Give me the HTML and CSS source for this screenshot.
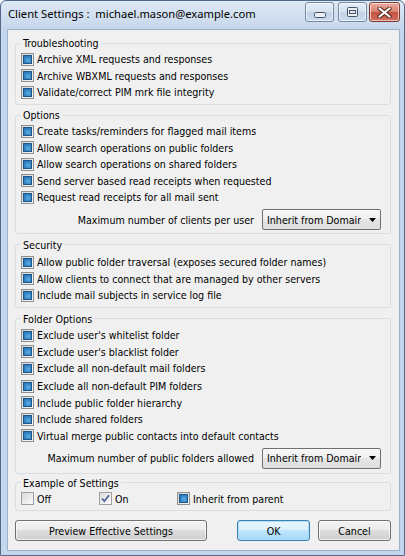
FILE: index.html
```html
<!DOCTYPE html>
<html>
<head>
  <title>Client Settings</title>
  <meta name="viewport" content="width=device-width, initial-scale=1.0" />
  <link rel="stylesheet" href="styles.css">
</head>
<body>
  <div class="window">
    <div class="titlebar">
      <span class="title">Client Settings :  michael.mason@example.com</span>
      <div class="caption">
        <span class="cap-btn cap-min">
          <svg width="12" height="6" viewBox="0 0 12 6"><rect x="0.5" y="0.5" width="11" height="5" rx="1" fill="#e9edf2" stroke="#44556b"/></svg>
        </span>
        <span class="cap-btn cap-max">
          <svg width="11" height="10" viewBox="0 0 11 10"><rect x="0.5" y="0.5" width="10" height="9" rx="1" fill="#e9edf2" stroke="#44556b"/><rect x="2.5" y="3.5" width="6" height="3" fill="#dfe7f1" stroke="#44556b"/></svg>
        </span>
        <span class="cap-btn cap-close">
          <svg width="15" height="11" viewBox="0 0 15 11"><path d="M2.5 1.5 L12.5 9.5 M12.5 1.5 L2.5 9.5" stroke="#5a2a22" stroke-width="4.2" stroke-linecap="round"/><path d="M2.5 1.5 L12.5 9.5 M12.5 1.5 L2.5 9.5" stroke="#ffffff" stroke-width="2.2" stroke-linecap="round"/></svg>
        </span>
      </div>
    </div>

    <div class="client">
      <fieldset class="group group-trouble">
        <legend>Troubleshooting</legend>
        <div class="row"><span class="cb mixed"></span>Archive XML requests and responses</div>
        <div class="row"><span class="cb mixed"></span>Archive WBXML requests and responses</div>
        <div class="row"><span class="cb mixed"></span>Validate/correct PIM mrk file integrity</div>
      </fieldset>

      <fieldset class="group group-options">
        <legend>Options</legend>
        <div class="row"><span class="cb mixed"></span>Create tasks/reminders for flagged mail items</div>
        <div class="row"><span class="cb mixed"></span>Allow search operations on public folders</div>
        <div class="row"><span class="cb mixed"></span>Allow search operations on shared folders</div>
        <div class="row"><span class="cb mixed"></span>Send server based read receipts when requested</div>
        <div class="row"><span class="cb mixed"></span>Request read receipts for all mail sent</div>
        <div class="limit">
          <span>Maximum number of clients per user</span>
          <div class="combo"><span class="combo-text">Inherit from Domain</span><svg width="7" height="4" viewBox="0 0 7 4"><path d="M0 0 H7 L3.5 4 Z" fill="#000"/></svg></div>
        </div>
      </fieldset>

      <fieldset class="group group-security">
        <legend>Security</legend>
        <div class="row"><span class="cb mixed"></span>Allow public folder traversal (exposes secured folder names)</div>
        <div class="row"><span class="cb mixed"></span>Allow clients to connect that are managed by other servers</div>
        <div class="row"><span class="cb mixed"></span>Include mail subjects in service log file</div>
      </fieldset>

      <fieldset class="group group-folders">
        <legend>Folder Options</legend>
        <div class="row"><span class="cb mixed"></span>Exclude user's whitelist folder</div>
        <div class="row"><span class="cb mixed"></span>Exclude user's blacklist folder</div>
        <div class="row"><span class="cb mixed"></span>Exclude all non-default mail folders</div>
        <div class="row row-gap"><span class="cb mixed"></span>Exclude all non-default PIM folders</div>
        <div class="row"><span class="cb mixed"></span>Include public folder hierarchy</div>
        <div class="row"><span class="cb mixed"></span>Include shared folders</div>
        <div class="row"><span class="cb mixed"></span>Virtual merge public contacts into default contacts</div>
        <div class="limit">
          <span>Maximum number of public folders allowed</span>
          <div class="combo"><span class="combo-text">Inherit from Domain</span><svg width="7" height="4" viewBox="0 0 7 4"><path d="M0 0 H7 L3.5 4 Z" fill="#000"/></svg></div>
        </div>
      </fieldset>

      <fieldset class="group group-example">
        <legend>Example of Settings</legend>
        <div class="choices">
          <div class="row choice"><span class="cb off"></span>Off</div>
          <div class="row choice"><span class="cb on"><svg width="11" height="11" viewBox="0 0 11 11"><path d="M2 5.5 L4.3 8.2 L9 2.2" fill="none" stroke="#4d5f98" stroke-width="1.7"/></svg></span>On</div>
          <div class="row choice"><span class="cb mixed"></span>Inherit from parent</div>
        </div>
      </fieldset>

      <div class="actions">
        <button class="btn btn-preview">Preview Effective Settings</button>
        <button class="btn btn-ok">OK</button>
        <button class="btn btn-cancel">Cancel</button>
      </div>
    </div>
  </div>
</body>
</html>
```

FILE: styles.css
```css
body {
  margin: 0;
  background: #ffffff;
  font-family: "DejaVu Sans Condensed", "DejaVu Sans", sans-serif;
  font-size: 10.6px;
  color: #000;
}
.window {
  width: 405px;
  height: 556px;
  box-sizing: border-box;
  border: 1px solid #52698a;
  border-radius: 6px 6px 0 0;
  background: linear-gradient(#dde8f5, #cddcee 20px, #c4d6ec 29px, #c4d6ec);
  display: flex;
  flex-direction: column;
}
.titlebar {
  height: 28px;
  display: flex;
  align-items: flex-start;
  padding-left: 7px;
}
.title {
  font-family: "Noto Sans", sans-serif;
  font-size: 11.2px;
  line-height: 26px;
  white-space: pre;
}
.caption {
  margin-left: auto;
  margin-right: 4px;
  margin-top: 1px;
  display: flex;
}
.cap-btn {
  height: 20px;
  width: 29px;
  box-sizing: border-box;
  border: 1px solid #75889f;
  border-radius: 3px;
  background: linear-gradient(#e6eef8, #d3e0ef 50%, #c2d3e8 50%, #cbdbee);
  box-shadow: inset 0 0 0 1px rgba(255,255,255,0.6);
  display: flex;
  align-items: center;
  justify-content: center;
}
.cap-min { margin-right: 4px; }
.cap-min svg { margin-top: 6px; }
.cap-max { margin-right: 2px; }
.cap-close {
  width: 31px;
  border-color: #7c3a2f;
  background: linear-gradient(#e9a99b, #d88271 50%, #c4523f 50%, #d0705f);
}
.client {
  flex: 1;
  margin: 0 4px 4px 6px;
  border: 1px solid #9db1ca;
  background: #f0f0f0;
  padding: 0 8px 0 7px;
  display: flex;
  flex-direction: column;
}
.group {
  margin: 4px 0 0;
  padding: 1px 5px 3px;
  border: 1px solid #d5dfe5;
  border-radius: 3px;
  min-width: 0;
}
.group legend {
  padding: 0 2px;
  line-height: 14px;
}
.group-trouble { margin-top: 6px; }
.group-options { margin-top: 3.5px; }
.group-security { margin-top: 3.5px; padding-top: 2.5px; }
.group-folders { margin-top: 4px; padding-top: 1.5px; padding-bottom: 4px; }
.group-example { margin-top: 2px; padding-top: 1px; }
.row {
  display: flex;
  align-items: center;
  gap: 3px;
  height: 16.5px;
  white-space: nowrap;
}
.row-gap { margin-top: 1.5px; }
.cb {
  width: 13px;
  height: 13px;
  box-sizing: border-box;
  border: 1px solid #8e8f8f;
  background: linear-gradient(135deg, #d6d6d6, #f8f8f8);
  position: relative;
  flex: none;
}
.cb.mixed::after {
  content: "";
  position: absolute;
  left: 1px;
  top: 1px;
  width: 9px;
  height: 9px;
  box-sizing: border-box;
  border: 1px solid #1d5789;
  background: radial-gradient(circle at 60% 60%, #5eaee4, #2b7cc0 70%);
}
.cb.off {
  border-color: #a0a0a0;
  background: linear-gradient(135deg, #d9d9d9, #fbfbfb);
}
.cb.on {
  border-color: #a0a0a0;
  background: linear-gradient(135deg, #dcdcdc, #fbfbfb);
}
.cb.on svg {
  display: block;
}
.limit {
  display: flex;
  justify-content: flex-end;
  align-items: center;
  gap: 8px;
  height: 21px;
  margin-top: 3.5px;
  padding-right: 4px;
  white-space: nowrap;
}
.combo {
  width: 119px;
  height: 21px;
  box-sizing: border-box;
  border: 1px solid #707070;
  border-radius: 2px;
  background: linear-gradient(#f8f8f8, #efefef 50%, #e5e5e5 50%, #dedede);
  display: flex;
  align-items: center;
  padding-left: 4px;
}
.combo-text {
  width: 94px;
  overflow: hidden;
  white-space: nowrap;
}
.combo svg {
  margin-left: 8px;
}
.choices {
  display: flex;
}
.choice {
  width: 78px;
  flex: none;
}
.actions {
  display: flex;
  margin-top: 9px;
}
.btn {
  height: 21px;
  box-sizing: border-box;
  border: 1px solid #707070;
  border-radius: 3px;
  background: linear-gradient(#f2f2f2, #ebebeb 50%, #dddddd 50%, #cfcfcf);
  box-shadow: inset 0 0 0 1px rgba(255,255,255,0.7);
  font: inherit;
  color: #000;
  padding: 0;
}
.btn-preview { width: 192px; }
.btn-ok {
  width: 73px;
  margin-left: auto;
  border-color: #3c7fb1;
  background: linear-gradient(#eaf6fd, #d9f0fc 50%, #bee6fd 50%, #a7d9f5);
  box-shadow: inset 0 0 0 1px #a9e0f7;
}
.btn-cancel {
  width: 73px;
  margin-left: 8px;
}
```
